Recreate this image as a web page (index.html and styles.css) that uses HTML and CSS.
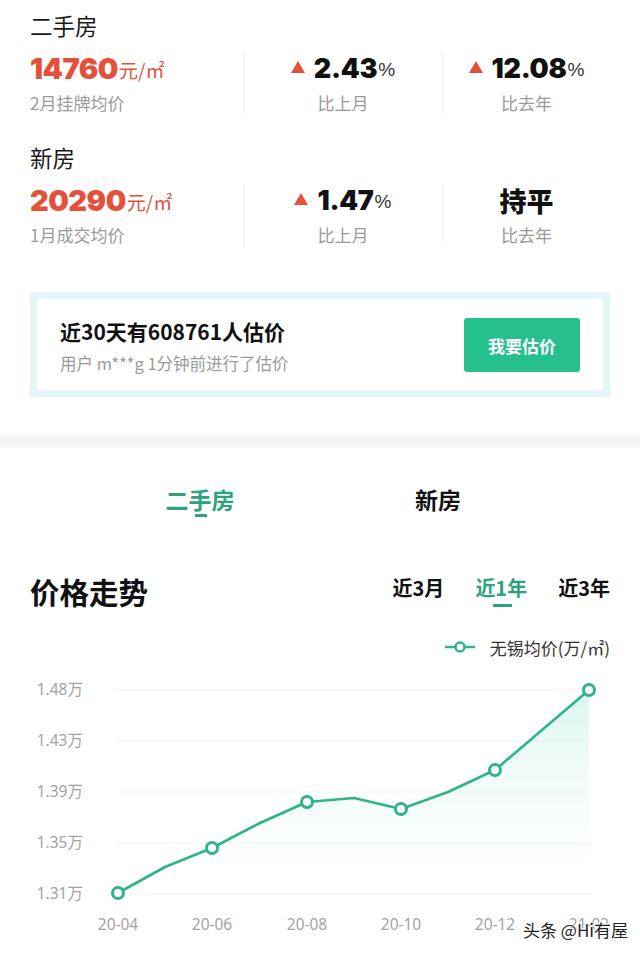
FILE: index.html
```html
<!DOCTYPE html>
<html lang="zh-CN">
<head>
<meta charset="utf-8">
<title>价格走势</title>
<link rel="stylesheet" href="styles.css">
</head>
<body>
<div class="page">
  <section class="sec sec-first">
    <div class="sec-title">二手房</div>
    <div class="stats">
      <div class="stat stat-main">
        <div class="val"><span class="price">14760</span><span class="unit">元/㎡</span></div>
        <div class="lbl">2月挂牌均价</div>
      </div>
      <div class="stat">
        <div class="val"><span class="tri"></span><span class="num">2.43</span><span class="pct">%</span></div>
        <div class="lbl">比上月</div>
      </div>
      <div class="stat">
        <div class="val"><span class="tri"></span><span class="num">12.08</span><span class="pct">%</span></div>
        <div class="lbl">比去年</div>
      </div>
    </div>
  </section>
  <section class="sec">
    <div class="sec-title">新房</div>
    <div class="stats">
      <div class="stat stat-main">
        <div class="val"><span class="price">20290</span><span class="unit">元/㎡</span></div>
        <div class="lbl">1月成交均价</div>
      </div>
      <div class="stat">
        <div class="val"><span class="tri"></span><span class="num">1.47</span><span class="pct">%</span></div>
        <div class="lbl">比上月</div>
      </div>
      <div class="stat">
        <div class="val"><span class="flat">持平</span></div>
        <div class="lbl">比去年</div>
      </div>
    </div>
  </section>

  <div class="banner">
    <div class="banner-inner">
      <div class="b-text">
        <div class="b-title">近30天有608761人估价</div>
        <div class="b-sub">用户 m***g 1分钟前进行了估价</div>
      </div>
      <div class="b-btn">我要估价</div>
    </div>
  </div>

  <div class="band"></div>

  <div class="tabs">
    <div class="tab active">二手房</div>
    <div class="tab">新房</div>
  </div>

  <div class="chart-head">
    <div class="chart-title">价格走势</div>
    <div class="ranges">
      <div class="range">近3月</div>
      <div class="range active">近1年</div>
      <div class="range">近3年</div>
    </div>
  </div>

  <div class="legend">
    <svg class="legend-icon" width="30" height="14" viewBox="0 0 30 14"><line x1="0" y1="7" x2="30" y2="7" stroke="#2db489" stroke-width="2.5"/><circle cx="15" cy="7" r="4.5" fill="#fff" stroke="#2db489" stroke-width="2.5"/></svg>
    <span class="legend-text">无锡均价(万/㎡)</span>
  </div>

  <svg class="chart" width="640" height="294" viewBox="0 0 640 294">
    <defs>
      <linearGradient id="fillg" x1="0" y1="0" x2="0" y2="1">
        <stop offset="0" stop-color="#5fd8b8" stop-opacity="0.22"/>
        <stop offset="0.7" stop-color="#c8f2e8" stop-opacity="0.1"/>
        <stop offset="1" stop-color="#ffffff" stop-opacity="0"/>
      </linearGradient>
    </defs>
    <g stroke="#f3f3f3" stroke-width="1">
      <line x1="118" y1="31" x2="592" y2="31"/>
      <line x1="118" y1="82" x2="592" y2="82"/>
      <line x1="118" y1="133" x2="592" y2="133"/>
      <line x1="118" y1="184" x2="592" y2="184"/>
      <line x1="118" y1="235" x2="592" y2="235"/>
    </g>
    <g class="ylab" text-anchor="end">
      <text x="83" y="36">1.48万</text>
      <text x="83" y="87">1.43万</text>
      <text x="83" y="138">1.39万</text>
      <text x="83" y="189">1.35万</text>
      <text x="83" y="240">1.31万</text>
    </g>
    <path d="M118 234 L165 208 L212 189 L260 164 L307 143 L354 139 L401 150 L448 133 L495 111 L542 71 L589 31 L589 235 L118 235 Z" fill="url(#fillg)"/>
    <polyline points="118,234 165,208 212,189 260,164 307,143 354,139 401,150 448,133 495,111 542,71 589,31" fill="none" stroke="#2db489" stroke-width="2.6" stroke-linejoin="round"/>
    <g fill="#fff" stroke="#2db489" stroke-width="3">
      <circle cx="118" cy="234" r="5.5"/>
      <circle cx="212" cy="189" r="5.5"/>
      <circle cx="307" cy="143" r="5.5"/>
      <circle cx="401" cy="150" r="5.5"/>
      <circle cx="495" cy="111" r="5.5"/>
      <circle cx="589" cy="31" r="5.5"/>
    </g>
    <g class="xlab" text-anchor="middle">
      <text x="118" y="271">20-04</text>
      <text x="212" y="271">20-06</text>
      <text x="307" y="271">20-08</text>
      <text x="401" y="271">20-10</text>
      <text x="495" y="271">20-12</text>
      <text x="589" y="271">21-02</text>
    </g>
  </svg>

  <div class="watermark">头条 @Hi有屋</div>
</div>
</body>
</html>
```
FILE: styles.css
```css
* { box-sizing: border-box; }
html, body { margin: 0; padding: 0; background: #fff; }
body {
  font-family: "Noto Sans CJK SC", "Noto Sans", sans-serif;
  color: #1a1a1a;
}
.page {
  position: relative;
  width: 640px;
  height: 953px;
  overflow: hidden;
}
.sec {
  height: 132px;
  padding: 0 30px;
}
.sec-first { margin-top: 10px; }
.sec-title {
  height: 30px;
  line-height: 30px;
  font-size: 22.5px;
  color: #1a1a1a;
}
.stats {
  margin-top: 12px;
  display: grid;
  grid-template-columns: 213px 199px 168px;
}
.stat {
  display: flex;
  flex-direction: column;
  align-items: center;
  border-left: 1px solid #f2f2f2;
}
.stat-main {
  align-items: flex-start;
  border-left: none;
}
.val {
  height: 32px;
  display: flex;
  align-items: center;
  white-space: nowrap;
}
.price {
  font-family: "Inter", "Roboto", sans-serif;
  font-weight: 900;
  font-size: 29px;
  letter-spacing: -0.5px;
  color: #e5503b;
}
.unit {
  font-size: 19px;
  color: #e5503b;
  margin-left: 1px;
  margin-top: 3px;
}
.tri {
  width: 0;
  height: 0;
  border-left: 7px solid transparent;
  border-right: 7px solid transparent;
  border-bottom: 12px solid #e5503b;
  margin-right: 9px;
  margin-top: -2px;
}
.num {
  font-family: "Inter", "Roboto", sans-serif;
  font-weight: 900;
  font-size: 27px;
  letter-spacing: -0.3px;
  color: #111;
}
.pct {
  font-size: 19px;
  color: #333;
  margin-left: 1px;
  margin-top: 3px;
  font-family: "Liberation Sans", sans-serif;
}
.flat {
  font-size: 27px;
  font-weight: 900;
  color: #111;
}
.lbl {
  margin-top: 8px;
  height: 22px;
  line-height: 22px;
  font-size: 17px;
  color: #9a9a9a;
}

.banner {
  margin: 18px 30px 0;
  height: 105px;
  border: 7px solid #e3f8f6;
}
.banner-inner {
  height: 100%;
  padding: 0 23px;
  display: flex;
  align-items: center;
  justify-content: space-between;
}
.b-title {
  font-size: 21px;
  font-weight: 700;
  line-height: 30px;
  color: #111;
}
.b-sub {
  margin-top: 6px;
  font-size: 16.5px;
  line-height: 22px;
  color: #9a9a9a;
}
.b-btn {
  width: 116px;
  height: 54px;
  margin-top: 1px;
  border-radius: 3px;
  background: #26c08e;
  color: #fff;
  font-size: 17px;
  font-weight: 700;
  display: flex;
  align-items: center;
  justify-content: center;
}

.band {
  margin-top: 37px;
  height: 14px;
  background: linear-gradient(#fbfbfb, #f3f3f3 40%, #f3f3f3 70%, #fbfbfb);
}

.tabs {
  padding-top: 36px;
  padding-left: 140px;
  display: flex;
  gap: 118px;
}
.tab {
  width: 120px;
  height: 33px;
  line-height: 30px;
  text-align: center;
  font-size: 23px;
  font-weight: 700;
  color: #111;
  position: relative;
}
.tab.active { color: #2ba37e; }
.tab.active::after {
  content: "";
  position: absolute;
  left: 55px;
  bottom: 0;
  width: 12px;
  height: 3px;
  background: #2ba37e;
}

.chart-head {
  margin-top: 54px;
  padding: 0 30px;
  display: flex;
  justify-content: space-between;
  align-items: center;
  height: 40px;
}
.chart-title {
  font-size: 29.5px;
  font-weight: 700;
  line-height: 40px;
  color: #111;
}
.ranges {
  display: flex;
  gap: 31px;
  margin-top: -6px;
}
.range {
  position: relative;
  font-size: 20px;
  font-weight: 700;
  line-height: 28px;
  color: #111;
}
.range.active { color: #2ba37e; }
.range.active::after {
  content: "";
  position: absolute;
  left: 50%;
  margin-left: -8px;
  bottom: -5px;
  width: 19px;
  height: 3px;
  background: #2ba37e;
}

.legend {
  margin-top: 24px;
  padding-right: 30px;
  display: flex;
  justify-content: flex-end;
  align-items: center;
  height: 24px;
}
.legend-icon { margin-right: 15px; }
.legend-text {
  font-size: 17px;
  color: #333;
}

.chart { display: block; }
.ylab text {
  font-family: "Noto Sans", "Noto Sans CJK SC", sans-serif;
  font-size: 15.5px;
  fill: #a3a3a3;
}
.xlab text {
  font-family: "Noto Sans", sans-serif;
  font-size: 15.5px;
  fill: #a3a3a3;
}

.watermark {
  position: absolute;
  left: 523px;
  top: 918px;
  font-size: 17px;
  line-height: 24px;
  color: #222;
  text-shadow: 0 0 2px #fff, 0 0 2px #fff, 1px 1px 0 #fff, -1px -1px 0 #fff;
  white-space: nowrap;
}
```
